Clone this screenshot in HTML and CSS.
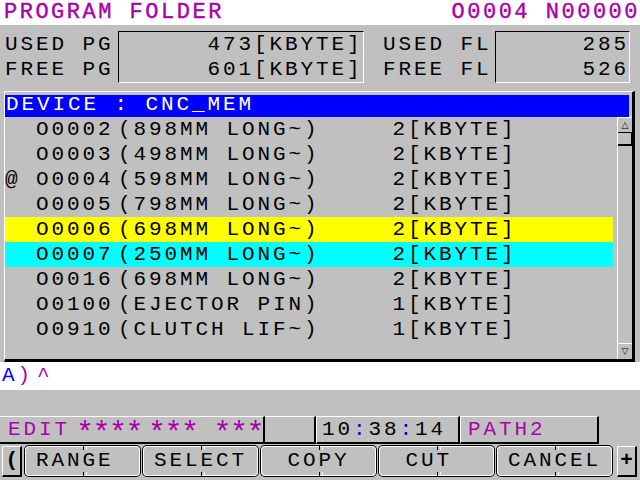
FILE: index.html
```html
<!DOCTYPE html>
<html>
<head>
<meta charset="utf-8">
<title>Program Folder</title>
<link rel="stylesheet" href="styles.css">
</head>
<body>
<div class="screen">
  <header class="title">
    <span>PROGRAM FOLDER</span>
    <span>O0004 N00000</span>
  </header>

  <section class="info">
    <div class="labels">
      <div>USED PG</div>
      <div>FREE PG</div>
    </div>
    <div class="box box-pg">
      <div class="mem-row"><span class="num">473</span><span>[KBYTE]</span></div>
      <div class="mem-row"><span class="num">601</span><span>[KBYTE]</span></div>
    </div>
    <div class="labels labels-fl">
      <div>USED FL</div>
      <div>FREE FL</div>
    </div>
    <div class="box box-fl">
      <div>285</div>
      <div>526</div>
    </div>
  </section>

  <section class="list">
    <div class="device">DEVICE : CNC_MEM</div>
    <div class="list-body">
      <div class="rows">
        <div class="row"><span></span><span>O0002</span><span>(898MM LONG~)</span><span class="size">2</span><span>[KBYTE]</span></div>
        <div class="row"><span></span><span>O0003</span><span>(498MM LONG~)</span><span class="size">2</span><span>[KBYTE]</span></div>
        <div class="row"><span>@</span><span>O0004</span><span>(598MM LONG~)</span><span class="size">2</span><span>[KBYTE]</span></div>
        <div class="row"><span></span><span>O0005</span><span>(798MM LONG~)</span><span class="size">2</span><span>[KBYTE]</span></div>
        <div class="row row-yellow"><span></span><span>O0006</span><span>(698MM LONG~)</span><span class="size">2</span><span>[KBYTE]</span></div>
        <div class="row row-cyan"><span></span><span>O0007</span><span>(250MM LONG~)</span><span class="size">2</span><span>[KBYTE]</span></div>
        <div class="row"><span></span><span>O0016</span><span>(698MM LONG~)</span><span class="size">2</span><span>[KBYTE]</span></div>
        <div class="row"><span></span><span>O0100</span><span>(EJECTOR PIN)</span><span class="size">1</span><span>[KBYTE]</span></div>
        <div class="row"><span></span><span>O0910</span><span>(CLUTCH LIF~)</span><span class="size">1</span><span>[KBYTE]</span></div>
      </div>
      <div class="scrollbar">
        <div class="sb-btn sb-up">&#9651;</div>
        <div class="sb-thumb"></div>
        <div class="sb-track"></div>
        <div class="sb-btn sb-down">&#9661;</div>
      </div>
    </div>
  </section>

  <div class="prompt"><span class="p-a">A</span><span class="p-gt">)</span><span class="p-cur">^</span></div>

  <div class="status">
    <div class="cell cell-mode"><span>EDIT</span><span class="ast">****</span><span class="ast">***</span><span class="ast ast-gap">***</span></div>
    <div class="cell cell-empty"></div>
    <div class="cell cell-time">10<span class="colon">:</span>38<span class="colon">:</span>14</div>
    <div class="cell cell-path">PATH2</div>
  </div>

  <nav class="softkeys">
    <div class="edge-key edge-back">(</div>
    <div class="key">RANGE</div>
    <div class="key">SELECT</div>
    <div class="key"> COPY</div>
    <div class="key"> CUT</div>
    <div class="key">CANCEL</div>
    <div class="edge-key edge-plus">+</div>
  </nav>
</div>
</body>
</html>
```

FILE: styles.css
```css
* { box-sizing: border-box; }

html, body {
  margin: 0;
  padding: 0;
  background: #c0c0c0;
}

.screen {
  width: 640px;
  height: 480px;
  overflow: hidden;
  background: #c0c0c0;
  font-family: "Liberation Mono", monospace;
  font-size: 21px;
  letter-spacing: 2.9px;
  color: #000;
}

/* title */
.title {
  height: 25px;
  background: #fff;
  color: #aa00aa;
  display: flex;
  justify-content: space-between;
  font-size: 22px;
  letter-spacing: 2.5px;
  line-height: 25px;
  padding-left: 4px;
  -webkit-text-stroke: 0.4px #aa00aa;
}

/* info */
.info {
  display: flex;
  padding-top: 6px;
  height: 66px;
}
.labels {
  width: 118px;
  padding-left: 5px;
  padding-top: 1px;
  line-height: 25px;
}
.labels-fl {
  width: 131px;
  padding-left: 19px;
}
.box {
  height: 52px;
  border-top: 1px solid #000;
  border-left: 1px solid #000;
  border-bottom: 1px solid #fff;
  border-right: 1px solid #fff;
  line-height: 25px;
}
.box-pg { width: 246px; }
.box-fl { width: 135px; text-align: right; }
.mem-row {
  display: grid;
  grid-template-columns: 135px auto;
}
.num { text-align: right; }

/* list */
.list {
  margin: 0 5px 0 4px;
  height: 271px;
  border-top: 1px solid #fff;
  border-left: 1px solid #fff;
  border-right: 3px solid #000;
  border-bottom: 3px solid #000;
  display: flex;
  flex-direction: column;
}
.device {
  margin: 3px 3px 0 0;
  height: 22px;
  background: #0000ff;
  color: #fff;
  line-height: 20px;
  padding-left: 1px;
  white-space: pre;
}
.list-body {
  flex: 1;
  display: flex;
}
.rows {
  flex: 1;
  padding-right: 4px;
}
.row {
  height: 25px;
  line-height: 25px;
  display: grid;
  grid-template-columns: 31px 82px 260px 30px 1fr;
  white-space: pre;
}
.row .size { text-align: right; }
.row-yellow { background: #ffff00; }
.row-cyan { background: #00ffff; }

.scrollbar {
  width: 15px;
  border-left: 1px solid #fff;
  display: flex;
  flex-direction: column;
}
.sb-btn {
  height: 16px;
  font-family: "DejaVu Sans", sans-serif;
  font-size: 9px;
  letter-spacing: 0;
  line-height: 15px;
  text-align: center;
}
.sb-up {
  border-top: 1px solid #fff;
  border-bottom: 1px solid #000;
}
.sb-thumb {
  height: 13px;
  border-right: 1px solid #000;
  border-bottom: 2px solid #000;
}
.sb-track { flex: 1; }
.sb-down {
  border-top: 1px solid #fff;
}

/* prompt */
.prompt {
  height: 28px;
  background: #fff;
  line-height: 28px;
  padding-left: 2px;
  white-space: pre;
}
.p-a { color: #0000ff; }
.p-gt { color: #aa00aa; }
.p-cur {
  color: #aa00aa;
  margin-left: 4px;
}

/* status */
.status {
  margin-top: 26px;
  height: 28px;
  display: flex;
}
.cell {
  height: 28px;
  border-top: 1px solid #fff;
  border-right: 2px solid #000;
  border-bottom: 2px solid #000;
  line-height: 25px;
  white-space: pre;
}
.cell-mode {
  width: 265px;
  padding-left: 8px;
  color: #aa00aa;
}
.ast {
  display: inline-block;
  margin-left: 6px;
  font-size: 30px;
  letter-spacing: -1.5px;
  vertical-align: -7px;
  line-height: 20px;
}
.ast-gap { margin-left: 16px; }
.cell-empty { width: 51px; }
.cell-time {
  width: 144px;
  border-left: 1px solid #fff;
  padding-left: 5px;
}
.colon { color: #0000ff; }
.cell-path {
  width: 139px;
  border-left: 1px solid #fff;
  padding-left: 7px;
  color: #aa00aa;
}

/* soft keys */
.softkeys {
  margin-top: 2px;
  height: 31px;
  display: flex;
  gap: 3px;
  padding-left: 2px;
}
.edge-key {
  width: 20px;
  height: 31px;
  border-top: 1px solid #fff;
  border-left: 1px solid #fff;
  border-right: 2px solid #000;
  border-bottom: 2px solid #000;
  line-height: 28px;
  letter-spacing: 0;
  font-weight: bold;
  text-align: right;
  padding-right: 2px;
}
.edge-plus {
  margin-left: 2px;
  text-align: center;
  padding-right: 0;
}
.key {
  position: relative;
  width: 115px;
  height: 30px;
  border: 1px solid #fff;
  border-radius: 4px;
  box-shadow: 0 0 0 1px #000;
  line-height: 28px;
  padding-left: 10px;
  white-space: pre;
}
.key::before,
.key::after {
  content: "";
  position: absolute;
  left: 50%;
  width: 2px;
  height: 4px;
  border-left: 1px solid #000;
  border-right: 1px solid #fff;
}
.key::before { top: -1px; }
.key::after { bottom: -1px; }
```
